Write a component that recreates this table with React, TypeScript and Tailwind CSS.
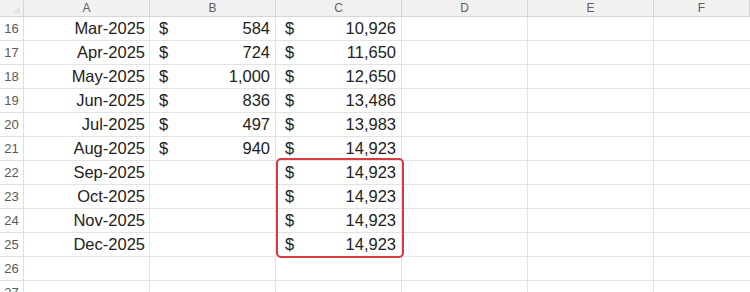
import React from "react";

const cols = ["A", "B", "C", "D", "E", "F"];

// month, B amount, C running total
const rows: { n: number; month?: string; b?: string; c?: string }[] = [
  { n: 16, month: "Mar-2025", b: "584", c: "10,926" },
  { n: 17, month: "Apr-2025", b: "724", c: "11,650" },
  { n: 18, month: "May-2025", b: "1,000", c: "12,650" },
  { n: 19, month: "Jun-2025", b: "836", c: "13,486" },
  { n: 20, month: "Jul-2025", b: "497", c: "13,983" },
  { n: 21, month: "Aug-2025", b: "940", c: "14,923" },
  { n: 22, month: "Sep-2025", c: "14,923" },
  { n: 23, month: "Oct-2025", c: "14,923" },
  { n: 24, month: "Nov-2025", c: "14,923" },
  { n: 25, month: "Dec-2025", c: "14,923" },
  { n: 26 },
  { n: 27 },
];

function Money({ value }: { value?: string }) {
  if (!value) return <div className="h-6 border-r border-b border-[#e3e3e3]" />;
  return (
    <div className="h-6 border-r border-b border-[#e3e3e3] flex items-center justify-between pl-[9px] pr-[5px]">
      <span>$</span>
      <span>{value}</span>
    </div>
  );
}

export default function App() {
  return (
    <div
      className="relative w-[750px] h-[292px] overflow-hidden bg-white text-[#222] text-[16.5px] leading-none"
      style={{ fontFamily: '"Liberation Sans", Arial, sans-serif' }}
    >
      <div className="grid grid-cols-[24px_126px_126px_126px_126px_126px_1fr]">
        {/* column headers */}
        <div className="h-[17px] bg-[#f1f1f1] border-r border-b border-[#d6d6d6] relative">
          <div className="absolute right-[3px] bottom-[3px] w-0 h-0 border-l-[7px] border-l-transparent border-b-[7px] border-b-[#e2e2e2]" />
        </div>
        {cols.map((c) => (
          <div
            key={c}
            className="h-[17px] bg-[#f1f1f1] border-r border-b border-[#d6d6d6] flex items-center justify-center text-[12px] text-[#5f5f5f]"
          >
            {c}
          </div>
        ))}

        {rows.map((r) => (
          <React.Fragment key={r.n}>
            <div className="h-6 border-r border-b border-[#dedede] flex items-center justify-center text-[13px] text-[#5a5a5a]">
              {r.n}
            </div>
            <div className="h-6 border-r border-b border-[#e3e3e3] flex items-center justify-end pr-[4px]">
              {r.month}
            </div>
            <Money value={r.b} />
            <Money value={r.c} />
            <div className="h-6 border-r border-b border-[#e3e3e3]" />
            <div className="h-6 border-r border-b border-[#e3e3e3]" />
            <div className="h-6 border-b border-[#e3e3e3]" />
          </React.Fragment>
        ))}
      </div>

      {/* red highlight around C22:C25 */}
      <div className="absolute left-[276px] top-[158px] w-[128px] h-[100px] border-2 border-[#d9393f] rounded-[5px] pointer-events-none" />
    </div>
  );
}
